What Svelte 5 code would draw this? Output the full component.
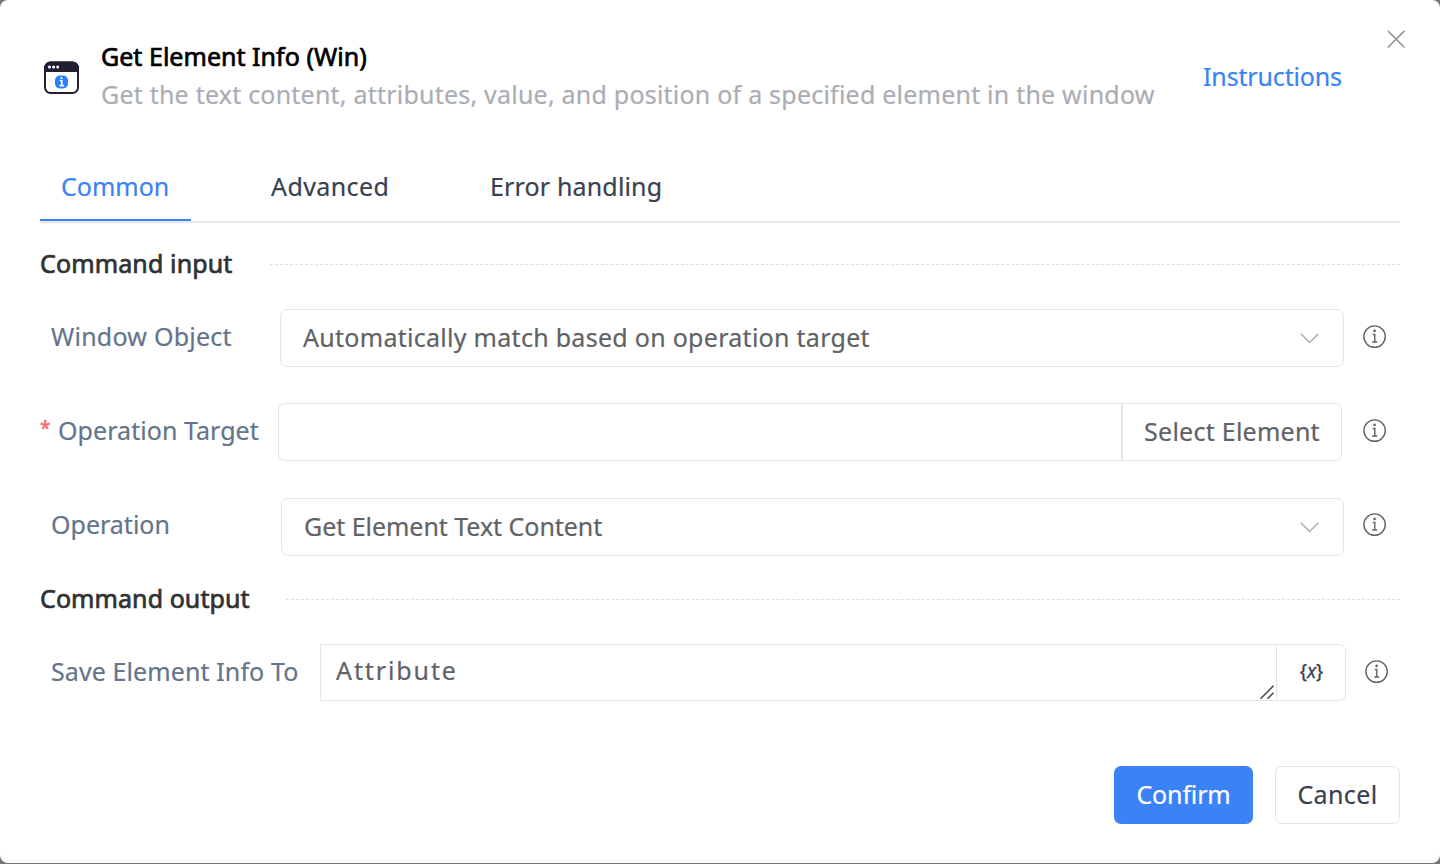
<script>
  const tabs = [
    { label: 'Common', cls: 'common', active: true },
    { label: 'Advanced', cls: 'advanced', active: false },
    { label: 'Error handling', cls: 'errors', active: false }
  ];
</script>

{#snippet info()}
  <svg class="info" viewBox="0 0 24 24" width="24" height="24" fill="none" stroke="#606266" stroke-width="1.4">
    <circle cx="11.6" cy="11.6" r="10.7" />
    <path d="M9.7 9.500h2.100v7.300M9.200 17h5" />
    <circle cx="11.600" cy="5.900" r="1.300" fill="#606266" stroke="none" />
  </svg>
{/snippet}

{#snippet chevron()}
  <svg class="chevron" width="20" height="12" viewBox="0 0 20 12" fill="none" stroke="#a8abb2" stroke-width="1.4"><path d="M.8 .800l8.800 8.800 8.800-8.800" /></svg>
{/snippet}

<main class="dialog">
  <header>
    <svg class="logo" width="36" height="34" viewBox="0 0 36 34">
      <rect x="1" y="1.500" width="33" height="30.500" rx="5.500" fill="#fff" stroke="#231f30" stroke-width="2" />
      <path d="M0 11V7a6.500 6.500 0 0 1 6.500-6.500h22a6.500 6.500 0 0 1 6.500 6.500v4z" fill="#231f30" />
      <g fill="#fff"><circle cx="5.500" cy="5.900" r="1.500" /><circle cx="9.600" cy="5.900" r="1.500" /><circle cx="13.700" cy="5.900" r="1.500" /></g>
      <rect x="11" y="14.500" width="13" height="13" rx="4.800" fill="#2b7fff" />
      <path d="M15.800 19.700h2v4.600M15.500 24.600h4.600" stroke="#fff" stroke-width="1.600" fill="none" />
      <circle cx="17.500" cy="17.200" r="1.100" fill="#fff" />
    </svg>
    <div class="heading">
      <h1>Get Element Info (Win)</h1>
      <p>Get the text content, attributes, value, and position of a specified element in the window</p>
    </div>
    <span class="link">Instructions</span>
    <svg class="close" width="18" height="18" viewBox="0 0 18 18" stroke="#909399" stroke-width="1.500"><path d="M.9.900l16.600 16.600M17.500.9L.9 17.500" /></svg>
  </header>

  <nav>
    {#each tabs as tab}
      <button class="tab {tab.cls}" class:active={tab.active}>{tab.label}</button>
    {/each}
  </nav>

  <div class="section first"><h2>Command input</h2><i></i></div>

  <div class="row r1">
    <span class="label">Window Object</span>
    <div class="box select"><span>Automatically match based on operation target</span>{@render chevron()}</div>
    {@render info()}
  </div>
  <div class="row r2">
    <span class="label"><b>*</b>Operation Target</span>
    <div class="box group"><div class="input"></div><button>Select Element</button></div>
    {@render info()}
  </div>
  <div class="row r3">
    <span class="label">Operation</span>
    <div class="box select"><span>Get Element Text Content</span>{@render chevron()}</div>
    {@render info()}
  </div>

  <div class="section second"><h2>Command output</h2><i></i></div>

  <div class="row r4">
    <span class="label">Save Element Info To</span>
    <div class="box area">
      <div class="text"><span class="attr">Attribute</span>
        <svg width="15" height="15" viewBox="0 0 15 15" stroke="#444" stroke-width="1.500"><path d="M.5 13.800L13.500.8M7.500 13.800l6-6" /></svg>
      </div>
      <button class="var">&#123;<em>x</em>&#125;</button>
    </div>
    {@render info()}
  </div>

  <footer>
    <button class="confirm">Confirm</button>
    <button class="cancel">Cancel</button>
  </footer>
</main>

<style>
  :global(body) { background: #757575; }
  * { box-sizing: border-box; }
  .dialog { height: 863px; padding: 0 34px 0 40px; background: #fff; border-radius: 8px; display: flex; flex-direction: column; font: 25px/38px "Noto Sans", sans-serif; color: #606266; overflow: hidden; -webkit-text-stroke-width: .2px; }
  h1, h2, p { margin: 0; font: inherit; white-space: nowrap; }
  button { font: inherit; color: inherit; background: none; border: 0; padding: 0; margin: 0; white-space: nowrap; }
  header { height: 154px; flex: none; display: flex; align-items: flex-start; }
  .logo { margin: 61px 21px 0 4px; flex: none; }
  .heading { margin-top: 37px; width: 1102px; flex: none; }
  h1 { color: #000; -webkit-text-stroke-width: .7px; letter-spacing: .03px; }
  p { color: #abadb4; letter-spacing: .22px; }
  .link { margin-top: 57px; color: #3b82f6; width: 184px; flex: none; letter-spacing: -.15px; }
  .close { margin-top: 30px; flex: none; }
  nav { height: 69px; margin-right: 6px; flex: none; display: flex; border-bottom: 2px solid #e4e7ed; color: #374151; }
  .tab { height: 67px; padding-bottom: 3px; flex: none; text-align: left; }
  .common { width: 151px; padding-left: 21px; }
  .tab.active { color: #3b82f6; border-bottom: 2px solid #3b82f6; padding-bottom: 2px; }
  .advanced { margin-left: 80px; width: 160px; letter-spacing: .4px; }
  .errors { margin-left: 59px; letter-spacing: .16px; }
  .section { display: flex; align-items: center; margin-right: 6px; flex: none; color: #303133; }
  .section i { flex: 1; border-top: 1px dashed #dcdfe6; }
  .section h2 { flex: none; -webkit-text-stroke-width: .7px; padding-bottom: 3px; letter-spacing: .13px; }
  .first { height: 83px; }
  .first h2 { width: 230px; }
  .second { height: 87px; }
  .second h2 { width: 246px; letter-spacing: .08px; }
  .row { display: flex; flex: none; height: 58px; }
  .r1 { margin-top: 3px; }
  .r2 { margin-top: 36px; }
  .r3 { margin-top: 37px; }
  .r4 { margin-top: 1px; height: 57px; }
  .label { flex: none; width: 240px; padding: 8px 0 0 11px; color: #64748b; white-space: nowrap; }
  .r1 .label { letter-spacing: .23px; }
  .r2 .label { width: 238px; padding-left: 0; display: flex; letter-spacing: .06px; }
  .r3 .label { width: 241px; padding-top: 7px; }
  .r4 .label { width: 280px; letter-spacing: .1px; }
  .label b { width: 18px; color: #f56c6c; font-size: 19px; font-weight: 600; line-height: 34px; }
  .box { border: 1px solid #e4e4e9; border-radius: 7px; flex: none; display: flex; }
  .select { width: 1064px; padding: 0 23px 0 22px; align-items: center; justify-content: space-between; }
  .select span { padding-bottom: 2px; }
  .chevron { margin-top: 1px; }
  .r1 .select span { letter-spacing: .285px; }
  .r3 .select { width: 1063px; }
  .r3 .select span { letter-spacing: -.04px; }
  .group { width: 1064px; }
  .group .input { flex: 1; }
  .group button { width: 220px; padding-bottom: 2px; border-left: 2px solid #e4e4ec; letter-spacing: .25px; }
  .info { margin: 16px 0 0 19px; flex: none; }
  .r2 .info { margin-left: 21px; }
  .r3 .info { margin-top: 15px; }
  .area { width: 1026px; border-radius: 0 7px 7px 0; }
  .text { flex: 1; display: flex; justify-content: space-between; align-items: flex-end; padding: 0 1px 0 15px; }
  .attr { align-self: flex-start; padding-top: 6px; letter-spacing: 1.9px; }
  .var { width: 69px; padding: 0 0 4px 1px; border-left: 1px solid #e4e4ec; color: #374151; font-size: 19px; -webkit-text-stroke-width: .3px; }
  footer { display: flex; justify-content: flex-end; gap: 22px; margin: 65px 6px 0 0; flex: none; }
  footer button { height: 58px; padding-bottom: 2px; border-radius: 7px; }
  .confirm { width: 139px; background: #3b82f6; color: #fff; letter-spacing: -.15px; }
  .cancel { width: 125px; border: 1px solid #e4e4e9; color: #374151; letter-spacing: .4px; }
</style>
